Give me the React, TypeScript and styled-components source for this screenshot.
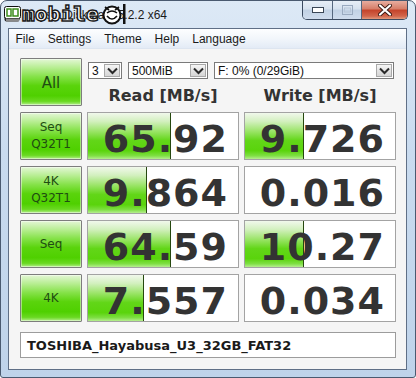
import React from "react";
import styled, { createGlobalStyle } from "styled-components";

const GlobalStyle = createGlobalStyle`
  html, body { margin: 0; padding: 0; background: #ffffff; }
  * { box-sizing: border-box; }
`;

const Window = styled.div`
  width: 416px;
  height: 378px;
  border: 1px solid #4a5a70;
  border-radius: 7px 7px 3px 3px;
  background: linear-gradient(180deg, #dde9f6 0%, #c9dbef 40%, #bfd3ea 100%);
  display: flex;
  flex-direction: column;
  overflow: hidden;
`;

const TitleBar = styled.div`
  height: 27px;
  flex: none;
  display: flex;
  align-items: flex-start;
  position: relative;
  padding-left: 3px;
`;

const TitleIcon = styled.div`
  width: 16px;
  height: 16px;
  margin-top: 6px;
  flex: none;
`;

const TitleText = styled.div`
  margin-left: 7px;
  margin-top: 7px;
  font-family: "Liberation Sans", Arial, sans-serif;
  font-size: 12px;
  color: #1a1a1a;
  white-space: nowrap;
`;

const Watermark = styled.div`
  position: absolute;
  left: 3px;
  top: 2px;
  height: 22px;
  display: flex;
  align-items: center;
  gap: 1px;
  pointer-events: none;
`;

const WatermarkWord = styled.span`
  font-family: "DejaVu Sans Mono", monospace;
  font-weight: bold;
  font-size: 19px;
  color: #ffffff;
  -webkit-text-stroke: 1.3px #1a1a1a;
  line-height: 22px;
  transform: scaleX(1.12);
  transform-origin: left center;
  margin-right: 9px;
`;

const CaptionGroup = styled.div`
  margin-left: auto;
  margin-right: 7px;
  margin-top: -1px;
  display: flex;
  height: 20px;
  border: 1px solid #3b4a60;
  border-top: none;
  border-radius: 0 0 5px 5px;
  overflow: hidden;
`;

const CaptionButton = styled.div<{ $kind: "min" | "max" | "close" }>`
  width: ${(p) => (p.$kind === "close" ? 46 : 29)}px;
  height: 100%;
  display: flex;
  align-items: center;
  justify-content: center;
  border-left: ${(p) => (p.$kind === "min" ? "none" : "1px solid #56677e")};
  background: ${(p) =>
    p.$kind === "close"
      ? "linear-gradient(180deg, #eab3a6 0%, #d7806b 45%, #c5452c 55%, #d2664c 85%, #e29a7c 100%)"
      : "linear-gradient(180deg, #e9f0f8 0%, #d7e2ef 45%, #c2d2e5 55%, #cfdced 100%)"};
`;

const Client = styled.div`
  flex: 1;
  margin: 0 8px 7px 7px;
  border: 1px solid #5f6f86;
  display: flex;
  flex-direction: column;
  background: #f5f5f5;
`;

const MenuBar = styled.div`
  height: 20px;
  flex: none;
  display: flex;
  align-items: center;
  background: linear-gradient(180deg, #fdfeff 0%, #f2f6fb 50%, #e3ebf6 100%);
  border-bottom: 1px solid #dde5f0;
`;

const MenuItem = styled.span`
  padding: 0 6.5px;
  font-family: "Liberation Sans", Arial, sans-serif;
  font-size: 12px;
  color: #1a1a1a;
`;

const Content = styled.div`
  flex: 1;
  padding: 9px 0 7px 11px;
  display: grid;
  grid-template-columns: 62px 152px 152px;
  grid-template-rows: 48px repeat(4, 48px) 30px;
  column-gap: 5px;
  row-gap: 6px;
`;

const GreenButton = styled.div`
  border: 1px solid #7d7d7d;
  border-radius: 1px;
  background: linear-gradient(
    180deg,
    #e4f7d6 0%,
    #b9ee95 18%,
    #86e24a 38%,
    #5ad40c 58%,
    #4fd000 80%,
    #6ad922 92%,
    #b4ef8c 100%
  );
  box-shadow: inset 0 0 0 1px rgba(255, 255, 255, 0.45);
  display: flex;
  flex-direction: column;
  align-items: center;
  justify-content: center;
  font-family: "DejaVu Sans", Verdana, sans-serif;
  color: #1f4d12;
`;

const AllLabel = styled.span`
  font-size: 15px;
  margin-top: 2px;
`;

const LabelLine = styled.span`
  font-size: 12px;
  line-height: 17px;
`;

const TopRight = styled.div`
  grid-column: 2 / span 2;
  display: flex;
  flex-direction: column;
`;

const ComboRow = styled.div`
  display: flex;
  gap: 6px;
  padding-left: 1px;
  margin-top: 4px;
`;

const Combo = styled.div<{ $w: number }>`
  width: ${(p) => p.$w}px;
  height: 17px;
  border: 1px solid #7a7a7a;
  background: #ffffff;
  display: flex;
  align-items: center;
  padding: 1px;
`;

const ComboValue = styled.span`
  flex: 1;
  padding-left: 2px;
  font-family: "Liberation Sans", Arial, sans-serif;
  font-size: 12px;
  color: #111;
  white-space: nowrap;
`;

const ComboArrow = styled.div`
  width: 16px;
  height: 13px;
  border: 1px solid #a9a9a9;
  background: linear-gradient(180deg, #f6f6f6 0%, #e4e4e4 50%, #d6d6d6 100%);
  display: flex;
  align-items: center;
  justify-content: center;
`;

const HeaderRow = styled.div`
  display: grid;
  grid-template-columns: 152px 152px;
  column-gap: 5px;
  margin-top: 8px;
`;

const Header = styled.div`
  text-align: center;
  font-family: "DejaVu Sans", Verdana, sans-serif;
  font-weight: bold;
  font-size: 16px;
  color: #333333;
  line-height: 18px;
`;

const Cell = styled.div`
  position: relative;
  border: 1px solid #a3a3a3;
  background: #ffffff;
  display: flex;
  align-items: center;
  justify-content: flex-end;
  padding: 6px 10px 0 0;
`;

const Bar = styled.div`
  position: absolute;
  left: 0;
  top: 0;
  bottom: 0;
  border-right: 1px solid #26480f;
  background: linear-gradient(
    180deg,
    #f1f8ec 0%,
    #d3f0bf 18%,
    #9ae467 40%,
    #62d618 60%,
    #5ad40c 82%,
    #7fdf44 93%,
    #b6ee90 100%
  );
`;

const Value = styled.span`
  position: relative;
  font-family: "DejaVu Sans", Verdana, sans-serif;
  font-weight: bold;
  font-size: 38px;
  letter-spacing: 1px;
  line-height: 40px;
  color: #333333;
`;

const Comment = styled.div`
  grid-column: 1 / span 3;
  margin-top: 4px;
  border: 1px solid #9c9c9c;
  background: #ffffff;
  display: flex;
  align-items: center;
  padding-left: 6px;
  font-family: "DejaVu Sans", Verdana, sans-serif;
  font-weight: bold;
  font-size: 13px;
  color: #1a1a1a;
`;

const Chevron = () => (
  <svg width="11" height="8" viewBox="0 0 11 8">
    <path d="M1 1.5 L5.5 6 L10 1.5" fill="none" stroke="#2a2a2a" strokeWidth="2" />
  </svg>
);

type Row = { label: string[]; read: string; rf: number; write: string; wf: number };

const rows: Row[] = [
  { label: ["Seq", "Q32T1"], read: "65.92", rf: 0.556, write: "9.726", wf: 0.39 },
  { label: ["4K", "Q32T1"], read: "9.864", rf: 0.39, write: "0.016", wf: 0 },
  { label: ["Seq"], read: "64.59", rf: 0.556, write: "10.27", wf: 0.39 },
  { label: ["4K"], read: "7.557", rf: 0.37, write: "0.034", wf: 0 },
];

const ValueCell = ({ value, fraction }: { value: string; fraction: number }) => (
  <Cell>
    {fraction > 0 && <Bar style={{ width: `${Math.round(fraction * 150)}px` }} />}
    <Value>{value}</Value>
  </Cell>
);

export default function App() {
  return (
    <>
      <GlobalStyle />
      <Window>
        <TitleBar>
          <TitleIcon>
            <svg width="16" height="16" viewBox="0 0 16 16">
              <rect x="0.5" y="1.5" width="15" height="13" rx="2" fill="#2b2b2b" />
              <rect x="2" y="3" width="12" height="7" fill="#4a9a2a" />
              <rect x="2" y="11" width="12" height="2.5" fill="#9a9a9a" />
            </svg>
          </TitleIcon>
          <TitleText>CrystalDiskMark 5.2.2 x64</TitleText>
          <Watermark>
            <svg width="17" height="16" viewBox="0 0 17 16">
              <rect x="0.5" y="0.5" width="16" height="12" rx="2" fill="#ffffff" stroke="#111" />
              <rect x="3" y="3" width="4" height="7" fill="none" stroke="#3c8c1c" strokeWidth="1.5" />
              <rect x="9" y="3" width="5" height="7" fill="none" stroke="#3c8c1c" strokeWidth="1.5" />
              <rect x="2" y="12.5" width="13" height="3" fill="#8a8a8a" />
            </svg>
            <WatermarkWord>mobile</WatermarkWord>
            <svg width="26" height="22" viewBox="0 0 26 22">
              <circle cx="11" cy="12" r="8.5" fill="#ffffff" stroke="#111" strokeWidth="2" />
              <path d="M6 10 Q11 6 16 10" fill="none" stroke="#111" strokeWidth="1.6" />
              <path d="M6 13 Q11 19 16 13" fill="none" stroke="#111" strokeWidth="1.6" />
              <path d="M4 4 L8 7 M18 4 L14 7" stroke="#111" strokeWidth="1.6" />
              <rect x="22" y="1" width="2.5" height="20" fill="#111" />
            </svg>
          </Watermark>
          <CaptionGroup>
            <CaptionButton $kind="min">
              <svg width="12" height="6" viewBox="0 0 12 6">
                <rect x="0.5" y="0.5" width="11" height="5" fill="#ffffff" stroke="#3a4656" />
              </svg>
            </CaptionButton>
            <CaptionButton $kind="max">
              <svg width="11" height="10" viewBox="0 0 11 10">
                <rect x="0.5" y="0.5" width="10" height="9" fill="none" stroke="#9aaac0" />
                <rect x="2.5" y="3" width="6" height="4" fill="none" stroke="#b8c6d8" />
              </svg>
            </CaptionButton>
            <CaptionButton $kind="close">
              <svg width="14" height="12" viewBox="0 0 14 12">
                <path d="M2 1.5 L12 10.5 M12 1.5 L2 10.5" stroke="#3a1a14" strokeWidth="4" strokeLinecap="round" />
                <path d="M2 1.5 L12 10.5 M12 1.5 L2 10.5" stroke="#ffffff" strokeWidth="2.2" strokeLinecap="round" />
              </svg>
            </CaptionButton>
          </CaptionGroup>
        </TitleBar>
        <Client>
          <MenuBar>
            <MenuItem>File</MenuItem>
            <MenuItem>Settings</MenuItem>
            <MenuItem>Theme</MenuItem>
            <MenuItem>Help</MenuItem>
            <MenuItem>Language</MenuItem>
          </MenuBar>
          <Content>
            <GreenButton>
              <AllLabel>All</AllLabel>
            </GreenButton>
            <TopRight>
              <ComboRow>
                <Combo $w={34}>
                  <ComboValue>3</ComboValue>
                  <ComboArrow><Chevron /></ComboArrow>
                </Combo>
                <Combo $w={80}>
                  <ComboValue>500MiB</ComboValue>
                  <ComboArrow><Chevron /></ComboArrow>
                </Combo>
                <Combo $w={180}>
                  <ComboValue>F: 0% (0/29GiB)</ComboValue>
                  <ComboArrow><Chevron /></ComboArrow>
                </Combo>
              </ComboRow>
              <HeaderRow>
                <Header>Read [MB/s]</Header>
                <Header>Write [MB/s]</Header>
              </HeaderRow>
            </TopRight>
            {rows.map((r) => (
              <React.Fragment key={r.read}>
                <GreenButton>
                  {r.label.map((l) => (
                    <LabelLine key={l}>{l}</LabelLine>
                  ))}
                </GreenButton>
                <ValueCell value={r.read} fraction={r.rf} />
                <ValueCell value={r.write} fraction={r.wf} />
              </React.Fragment>
            ))}
            <Comment>TOSHIBA_Hayabusa_U3_32GB_FAT32</Comment>
          </Content>
        </Client>
      </Window>
    </>
  );
}
